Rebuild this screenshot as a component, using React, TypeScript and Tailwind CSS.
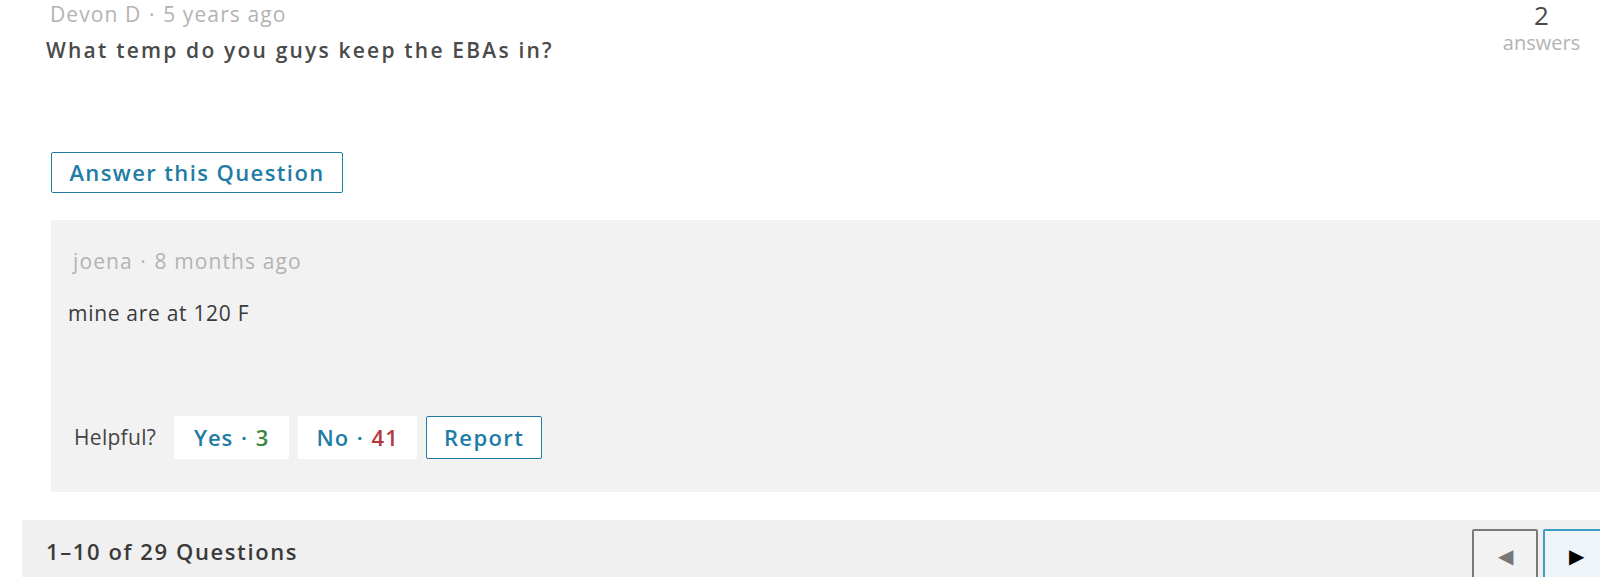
import React from "react";

const font = { fontFamily: "'Open Sans', Lato, sans-serif" };

function Meta({ name, when }: { name: string; when: string }) {
  return (
    <p className="text-[21px] leading-[28px] tracking-[1.1px] text-[#b3b3b3]">
      {name} <span className="mx-[1px]">·</span> {when}
    </p>
  );
}

export default function App() {
  return (
    <div className="w-[1600px] h-[577px] overflow-hidden bg-white" style={font}>
      {/* Question header */}
      <div className="flex justify-between pl-[46px] pr-[17px]">
        <div className="flex flex-col">
          <div className="pl-[4px]">
            <Meta name="Devon D" when="5 years ago" />
          </div>
          <h2 className="mt-[10px] text-[21px] leading-[24px] font-semibold tracking-[2.2px] text-[#4a4a4a]">
            What temp do you guys keep the EBAs in?
          </h2>
        </div>
        <div className="flex flex-col items-center w-[83px]">
          <span className="text-[26px] leading-[30px] text-[#4a4a4a]">2</span>
          <span className="text-[20px] leading-[26px] text-[#b3b3b3]">answers</span>
        </div>
      </div>

      {/* Answer button */}
      <div className="pl-[51px] mt-[90px]">
        <button className="w-[292px] h-[41px] border border-[#1f7ca6] rounded-[2px] text-[22px] font-semibold tracking-[1.4px] text-[#1f7ca6]">
          Answer this Question
        </button>
      </div>

      {/* Answer card */}
      <div className="ml-[51px] mt-[27px] w-[1600px] h-[272px] bg-[#f2f2f2] rounded-[3px] pl-[17px] pt-[27px]">
        <div className="pl-[5px]">
          <Meta name="joena" when="8 months ago" />
        </div>
        <p className="mt-[24px] text-[21px] leading-[28px] tracking-[0.7px] text-[#3a3a3a]">mine are at 120 F</p>
        <div className="mt-[89px] flex items-center">
          <span className="ml-[6px] mr-[18px] text-[21px] tracking-[0.3px] text-[#444]">Helpful?</span>
          <button className="w-[115px] h-[43px] bg-white rounded-[2px] text-[22px] font-semibold tracking-[1px] text-[#1f7ca6]">
            Yes <span className="mx-[1px]">·</span> <span className="text-[#3c873c]">3</span>
          </button>
          <button className="ml-[9px] w-[119px] h-[43px] bg-white rounded-[2px] text-[22px] font-semibold tracking-[1px] text-[#1f7ca6]">
            No <span className="mx-[1px]">·</span> <span className="text-[#b23a3a]">41</span>
          </button>
          <button className="ml-[9px] w-[116px] h-[43px] bg-white border border-[#1f7ca6] rounded-[2px] text-[22px] font-semibold tracking-[1.4px] text-[#1f7ca6]">
            Report
          </button>
        </div>
      </div>

      {/* Pagination bar */}
      <div className="ml-[22px] mt-[28px] w-[1600px] h-[80px] bg-[#f0f0f0] flex items-start justify-between pr-[13px]">
        <span className="ml-[24px] mt-[18px] text-[22px] leading-[26px] font-semibold tracking-[1.6px] text-[#3a3a3a]">
          1–10 of 29 Questions
        </span>
        <div className="mt-[9px] flex gap-[5px]">
          <button className="w-[66px] h-[54px] border-2 border-[#7a7a7a] bg-[#f2f2f2] rounded-[2px] flex items-center justify-center text-[#777] text-[20px]">
            ◀
          </button>
          <button className="w-[66px] h-[54px] border-2 border-[#3d9bc8] bg-[#eef4f7] rounded-[2px] flex items-center justify-center text-black text-[20px]">
            ▶
          </button>
        </div>
      </div>
    </div>
  );
}
